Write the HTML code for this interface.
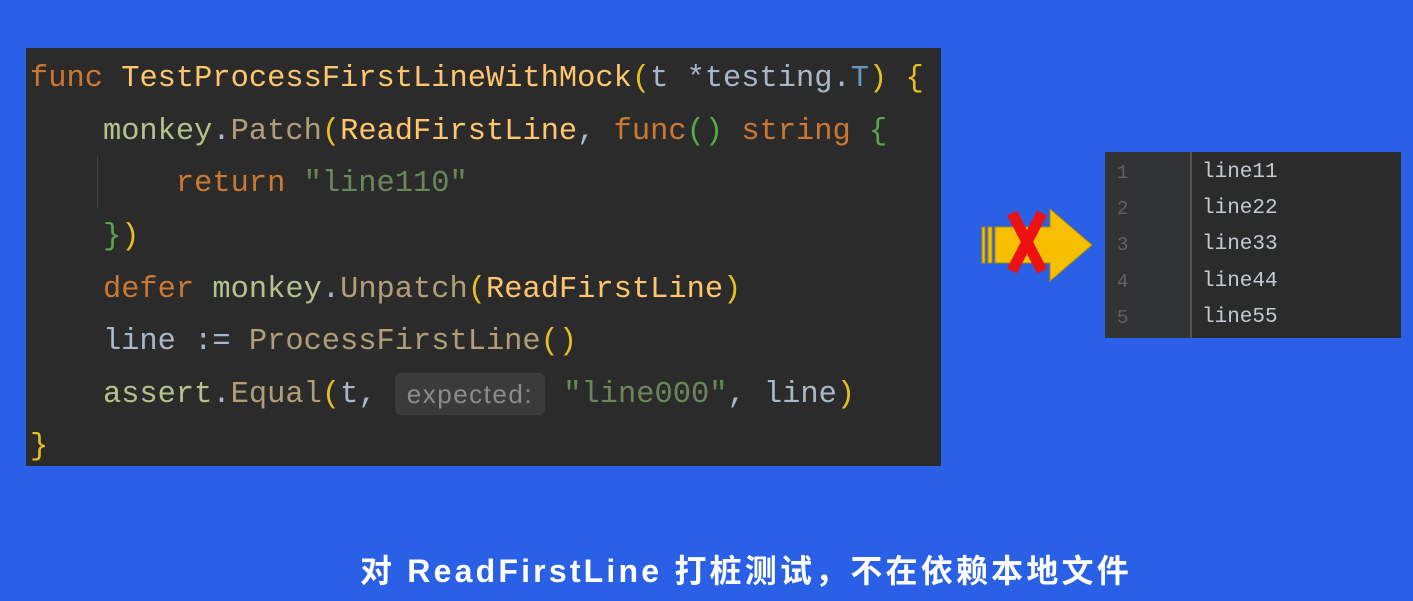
<!DOCTYPE html>
<html><head><meta charset="utf-8"><style>
body{margin:0;width:1413px;height:601px;background:#2a60e6;position:relative;overflow:hidden;font-family:"Liberation Mono",monospace}
.code{position:absolute;left:26px;top:48px;width:915px;height:418px;background:#2b2b2b}
.ln{position:absolute;left:4px;font-size:30.4px;white-space:pre;color:#a9b7c6;line-height:36px}
.k{color:#cc7832}.f{color:#ffc66d}.g{color:#a9b7c6}.s{color:#6a8759}.y{color:#e8bf1e}.m{color:#b5c28b}.p{color:#b09e78}.t{color:#6897bb}.gr{color:#59a84a}
.hint{display:inline-block;background:#3b3b3b;color:#8c8c8c;border-radius:6px;padding:0 12px;font-family:"Liberation Sans",sans-serif;font-size:26px;letter-spacing:1.5px;line-height:42px;vertical-align:top;margin-top:-4px}
.panel{position:absolute;left:1105px;top:152px;width:296px;height:186px;background:#2b2b2b}
.gut{position:absolute;left:0;top:0;width:85px;height:186px;background:#313335;border-right:2px solid #555}
.n{position:absolute;left:12px;font-size:19px;color:#606366}
.l{position:absolute;left:97px;font-size:21px;color:#c5cbd3}
.cap{position:absolute;left:360px;top:546px;color:#fff;font-weight:bold;font-size:32px;letter-spacing:3.2px;font-family:"Liberation Sans","Noto Sans CJK SC",sans-serif;white-space:nowrap}
</style></head><body>
<div class="code">
<div class="ln" style="top:13px"><span class="k">func</span> <span class="f">TestProcessFirstLineWithMock</span><span class="y">(</span>t *testing.<span class="t">T</span><span class="y">)</span> <span class="y">{</span></div>
<div class="ln" style="top:66px">    <span class="m">monkey</span>.<span class="p">Patch</span><span class="y">(</span><span class="f">ReadFirstLine</span>, <span class="k">func</span><span class="gr">()</span> <span class="k">string</span> <span class="gr">{</span></div>
<div style="position:absolute;left:71px;top:108px;width:1px;height:52px;background:#3d4a3a"></div>
<div class="ln" style="top:118px">        <span class="k">return</span> <span class="s">"line110"</span></div>
<div class="ln" style="top:171px">    <span class="gr">}</span><span class="y">)</span></div>
<div class="ln" style="top:224px">    <span class="k">defer</span> <span class="m">monkey</span>.<span class="p">Unpatch</span><span class="y">(</span><span class="f">ReadFirstLine</span><span class="y">)</span></div>
<div class="ln" style="top:276px">    line := <span class="p">ProcessFirstLine</span><span class="y">()</span></div>
<div class="ln" style="top:329px">    <span class="m">assert</span>.<span class="p">Equal</span><span class="y">(</span>t, <span class="hint">expected:</span> <span class="s">"line000"</span>, line<span class="y">)</span></div>
<div class="ln" style="top:381px"><span class="y">}</span></div>
</div>
<svg style="position:absolute;left:978px;top:205px" width="120" height="82">
<rect x="4" y="22" width="3" height="36" fill="#f6c000" stroke="#b08a00" stroke-width="1"/>
<rect x="10" y="22" width="4" height="36" fill="#f6c000" stroke="#b08a00" stroke-width="1"/>
<polygon points="17,22 72,22 72,4 114,40 72,76 72,58 17,58" fill="#f6c000" stroke="#b08a00" stroke-width="1"/>
<line x1="34" y1="8" x2="64" y2="66" stroke="#ee1111" stroke-width="11"/>
<line x1="64" y1="8" x2="34" y2="66" stroke="#ee1111" stroke-width="11"/>
</svg>
<div class="panel"><div class="gut"></div>
<div class="n" style="top:10px">1</div><div class="l" style="top:9px">line11</div>
<div class="n" style="top:46px">2</div><div class="l" style="top:45px">line22</div>
<div class="n" style="top:82px">3</div><div class="l" style="top:81px">line33</div>
<div class="n" style="top:119px">4</div><div class="l" style="top:118px">line44</div>
<div class="n" style="top:155px">5</div><div class="l" style="top:154px">line55</div>
</div>
<div class="cap">对 ReadFirstLine 打桩测试，不在依赖本地文件</div>
</body></html>
